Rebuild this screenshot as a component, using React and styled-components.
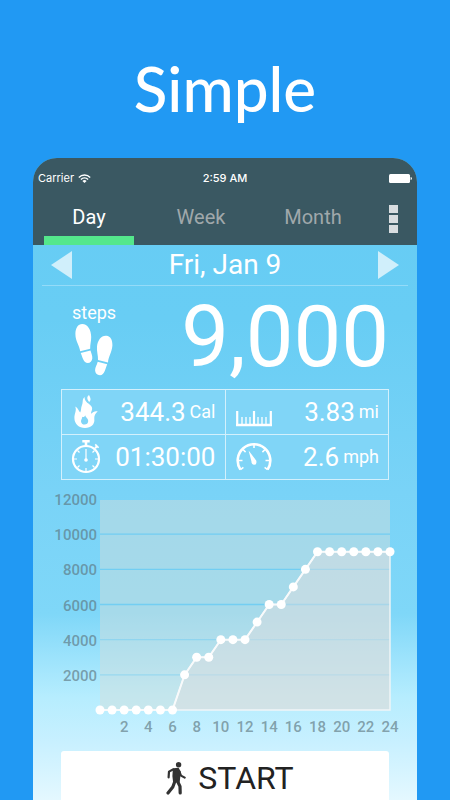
import React from 'react';
import styled, { createGlobalStyle } from 'styled-components';

const GlobalStyle = createGlobalStyle`
  * {
    box-sizing: border-box;
  }

  body {
    margin: 0;
    background-color: #2199f3;
    font-family: Roboto, 'Liberation Sans', sans-serif;
  }
`;

const Page = styled.main`
  height: 100vh;
  display: flex;
  flex-direction: column;
  overflow: hidden;
  background-color: #2199f3;
  color: #fff;
`;

const Title = styled.h1`
  margin: 0;
  padding: 48px 0 30px;
  font-family: Lato, sans-serif;
  font-size: 62px;
  font-weight: 500;
  line-height: 80px;
  text-align: center;
`;

const Phone = styled.section`
  flex: 1;
  min-height: 0;
  margin: 0 33px;
  display: flex;
  flex-direction: column;
  overflow: hidden;
  border-radius: 24px 24px 0 0;
  background: linear-gradient(
    #66ccf4 0%,
    #68cdf4 25%,
    #79d3f7 52%,
    #7fd7f8 71%,
    #9de3fc 78%,
    #b6edfe 84%,
    #c8f0ff 91%,
    #e4f8ff 100%
  );
`;

const Header = styled.header`
  flex: none;
  background-color: #3a5862;
`;

const StatusBar = styled.div`
  display: grid;
  grid-template-columns: 1fr auto 1fr;
  align-items: center;
  height: 40px;
  padding: 0 5px;
  font-family: Inter, sans-serif;
  font-size: 11px;
`;

const Carrier = styled.span`
  display: flex;
  align-items: center;
  gap: 4px;
`;

const Time = styled.span`
  font-weight: 500;
`;

const BatteryIcon = styled.svg`
  justify-self: end;
`;

const Nav = styled.nav`
  display: flex;
  gap: 22px;
  height: 47px;
  padding: 0 11px;
`;

const Tab = styled.button`
  flex: 1;
  padding: 0;
  border: 0;
  border-bottom: 9px solid ${({ $active }) => ($active ? '#54e78c' : 'transparent')};
  background: none;
  color: ${({ $active }) => ($active ? '#fff' : '#a0a8ab')};
  font-family: inherit;
  font-size: 20px;
  line-height: 38px;
  cursor: pointer;
`;

const MenuButton = styled.button`
  display: flex;
  flex-direction: column;
  align-items: center;
  gap: 2px;
  width: 26px;
  padding: 7px 0;
  border: 0;
  background: none;
  cursor: pointer;
`;

const MenuDot = styled.span`
  width: 9px;
  height: 8px;
  background-color: #d8dde0;
`;

const DateBar = styled.div`
  flex: none;
  display: flex;
  align-items: center;
  justify-content: space-between;
  height: 41px;
  margin: 0 9px;
  padding: 0 9px;
  border-bottom: 1px solid #94dbf8;
`;

const ArrowButton = styled.button`
  display: flex;
  padding: 0;
  border: 0;
  background: none;
  color: #d0effb;
  cursor: pointer;
`;

const DateText = styled.h2`
  margin: 0;
  font-size: 28px;
  font-weight: 400;
  line-height: 40px;
`;

const Summary = styled.div`
  flex: none;
  display: flex;
  align-items: flex-start;
  justify-content: space-between;
  height: 103px;
  padding: 0 28px 0 39px;
`;

const Steps = styled.div`
  display: flex;
  flex-direction: column;
  align-items: center;
  padding-top: 16px;
  font-size: 18px;
  line-height: 22px;
`;

const StepCount = styled.div`
  font-size: 85px;
  line-height: 102px;
`;

const Stats = styled.div`
  flex: none;
  display: grid;
  grid-template-columns: 1fr 1fr;
  gap: 1px;
  margin: 0 28px;
  border: 1px solid #d3f0fc;
  background-color: #d3f0fc;
`;

const Stat = styled.div`
  display: flex;
  align-items: center;
  justify-content: space-between;
  height: 44px;
  padding: 0 9px;
  background-color: #80d5f7;
`;

const Value = styled.span`
  display: flex;
  align-items: center;
  gap: 4px;
  font-size: 26px;
  line-height: 40px;
`;

const Unit = styled.span`
  font-size: 18px;
`;

const Chart = styled.svg`
  flex: none;
  display: block;
  width: 100%;
  height: auto;
  margin: 9px 0 12px;
`;

const AxisLabel = styled.text`
  fill: #5c747c;
  fill-opacity: 0.65;
  font-size: 15px;
  font-weight: 500;
`;

const StartButton = styled.button`
  flex: none;
  display: flex;
  align-items: center;
  justify-content: center;
  gap: 12px;
  height: 56px;
  margin: 0 28px;
  padding: 0 0 2px 10px;
  border: 0;
  border-radius: 3px;
  background-color: #fff;
  color: #222;
  font-family: inherit;
  font-size: 32px;
  cursor: pointer;
`;

const WifiIcon = () => (
  <svg width="13" height="9" viewBox="0 0 13 9" fill="none" stroke="#fff" strokeWidth="1.4" aria-hidden="true">
    <path d="M0.8 3.4C4 0.2 9 0.2 12.2 3.4" />
    <path d="M2.9 5.4C4.9 3.5 8.1 3.5 10.1 5.4" />
    <path d="M4.4 6.9C5.6 5.8 7.4 5.8 8.6 6.9L6.5 9Z" fill="#fff" stroke="none" />
  </svg>
);

const FootprintsIcon = () => (
  <svg width="38" height="52" viewBox="0 0 38 52" fill="#fff" aria-hidden="true">
    <path d="M7.2 0C12.8 0 16.2 6 16.2 13C16.2 17.5 15 20.5 15.2 24.8L5.2 27.2C4.6 21.5 0.4 17.5 0.4 10C0.4 4 3 0 7.2 0Z" />
    <path d="M5.7 28.9L15.5 26.6C16 29 17.6 31.5 17.3 34.5C17 37.2 15.2 39 12.8 39C8.5 39 7.5 33 5.7 28.9Z" />
    <path d="M31.5 11.8C35.5 12.2 37.6 16 37.4 21.5C37 28 33.4 32.5 33 38.5L23 35.9C23.3 31.5 21.5 27.5 22 22.5C22.6 16 26.5 11.2 31.5 11.8Z" />
    <path d="M22.7 37.7L32.2 40.2C30.3 44.5 29.8 51 25 51.2C22 51.2 20.1 49 20.1 46C20.1 43 22 40.7 22.7 37.7Z" />
  </svg>
);

const FlameIcon = () => (
  <svg width="30" height="34" viewBox="-3 0 30 34" fill="#fff" aria-hidden="true">
    <path
      fillRule="evenodd"
      d="M10.6 2C7.8 4.3 9.4 7 8 10C6.6 13 7.6 15.4 6.2 17.4C4.6 16.5 4.6 13.4 1.2 11.6C3 15.6 0.4 18.2 0.4 23C0.4 29 5 33 11 33C17 33 21 29.2 20.3 24C20 21 21.3 18.4 23.7 16.6C21 15.8 19.2 17 17.2 18.8C16.6 16.3 19.3 14.5 17.5 11.4C15.8 8.6 10.2 7.4 10.6 2ZM11.3 20.2C11.5 22.4 14.2 23.2 14.2 26C14.2 28.4 12.6 29.6 10.6 29.6C8.6 29.6 7 28.2 7 26.2C7 24.4 8.4 23.4 8.2 21.8C9.6 22.4 10.8 21.8 11.3 20.2Z"
    />
    <path d="M15 0C12.4 2 13 4.4 15.2 7C17.2 5 16.8 3.4 15 0Z" />
  </svg>
);

const StopwatchIcon = () => (
  <svg width="30" height="34" viewBox="-1 0 30 34" fill="none" stroke="#fff" aria-hidden="true">
    <circle cx="14" cy="19" r="13" strokeWidth="2.2" />
    <path d="M10.3 1.2H17.7M14 1V6" strokeWidth="2.6" />
    <path d="M23 8.2L25 6.2" strokeWidth="2" />
    <path d="M23.2 4.4L26.6 7.8" strokeWidth="1.6" />
    <path d="M14 9V19" strokeWidth="1.2" />
    <circle cx="14" cy="20" r="1.8" fill="#fff" stroke="none" />
    <path d="M2 19H5M23 19H26M14 28V31M5.5 10.5L7.5 12.5M22.5 10.5L20.5 12.5M5.5 27.5L7.5 25.5M22.5 27.5L20.5 25.5" strokeWidth="1.2" />
  </svg>
);

const RulerIcon = () => (
  <svg width="40" height="34" viewBox="-1 0 40 34" fill="none" stroke="#fff" aria-hidden="true">
    <path d="M1.2 16V30M18 16V30M34.8 16V30" strokeWidth="2.2" />
    <path d="M0 30H36" strokeWidth="2.4" />
    <path d="M6 22V29M10 22V29M14 22V29M22 22V29M26 22V29M30 22V29" strokeWidth="1.3" />
  </svg>
);

const GaugeIcon = () => (
  <svg width="40" height="34" viewBox="-1 -2 40 34" fill="none" stroke="#fff" aria-hidden="true">
    <path d="M4.4 27.6A16.3 16.3 0 1 1 31.6 27.6" strokeWidth="2.6" />
    <path d="M4.4 27.6L7.4 25.4M31.6 27.6L28.6 25.4M2 18.5H6.5M34 18.5H29.5M18 2.5V6M7 7.5L9.6 10.1M29 7.5L26.4 10.1" strokeWidth="1.6" />
    <path d="M12.6 8.6L20.2 18.6C21 21.3 19.8 22.8 18.2 22.8C16.4 22.8 15.4 21.2 15.4 19.2Z" fill="#fff" stroke="none" />
  </svg>
);

const WalkerIcon = () => (
  <svg width="20" height="33" viewBox="0 0 20 33" fill="none" stroke="#333" strokeLinecap="round" strokeLinejoin="round" aria-hidden="true">
    <circle cx="12.6" cy="2.8" r="2.7" fill="#333" stroke="none" />
    <path d="M8 7.4L12 7L13.6 10L12.6 19L8.2 19.4L7.6 14Z" fill="#333" strokeWidth="2.4" />
    <path d="M7.4 7.3L3 9.6L2.6 15.4" strokeWidth="2.2" />
    <path d="M13.4 9.6L15 13.6L18.7 15.6" strokeWidth="2.2" />
    <path d="M9 19L6.8 25L2 31" strokeWidth="3.2" />
    <path d="M11.4 19L14 24.4L14.2 31" strokeWidth="3.2" />
  </svg>
);

const stepsByHour = [
  0, 0, 0, 0, 0, 0, 0, 2000, 3000, 3000, 4000, 4000, 4000, 5000, 6000, 6000, 7000, 8000,
  9000, 9000, 9000, 9000, 9000, 9000, 9000,
];

const hourTicks = [2, 4, 6, 8, 10, 12, 14, 16, 18, 20, 22, 24];
const stepTicks = [2000, 4000, 6000, 8000, 10000, 12000];

const toX = (hour) => 67 + (hour * 290) / 24;
const toY = (steps) => 221 - (steps * 211) / 12000;

const StepsChart = () => {
  const points = stepsByHour.map((steps, hour) => `${toX(hour)},${toY(steps)}`).join(' ');

  return (
    <Chart viewBox="0 0 384 250" role="img" aria-label="Steps by hour">
      <rect x="67" y="11" width="290" height="210" fill="#d6dedb" fillOpacity="0.46" />
      {stepTicks.map((tick) => (
        <g key={tick}>
          {tick < 12000 && (
            <line x1="67" x2="357" y1={toY(tick)} y2={toY(tick)} stroke="#62c9f4" strokeWidth="1.4" strokeOpacity={tick > 4000 ? 0.75 : 0.4} />
          )}
          <AxisLabel x="64" y={toY(tick) + 6} textAnchor="end">
            {tick}
          </AxisLabel>
        </g>
      ))}
      <polygon
        points={`67,221 ${points} 357,221`}
        fill="#dbdde0"
        fillOpacity="0.5"
        stroke="#f1f5f7"
        strokeWidth="1.4"
      />
      <polyline points={points} fill="none" stroke="#f8fafb" strokeWidth="2" />
      {stepsByHour.map((steps, hour) => (
        <circle key={hour} cx={toX(hour)} cy={toY(steps)} r="4.5" fill="#fff" />
      ))}
      {hourTicks.map((hour) => (
        <AxisLabel key={hour} x={toX(hour)} y="243" textAnchor="middle">
          {hour}
        </AxisLabel>
      ))}
    </Chart>
  );
};

const App = () => {
  const [tab, setTab] = React.useState('Day');

  return (
    <>
      <GlobalStyle />
      <Page>
        <Title>Simple</Title>
        <Phone>
          <Header>
            <StatusBar>
              <Carrier>
                Carrier
                <WifiIcon />
              </Carrier>
              <Time>2:59 AM</Time>
              <BatteryIcon width="23" height="9" viewBox="0 0 23 9" fill="#fff" aria-hidden="true">
                <rect width="21" height="9" rx="1.5" />
                <path d="M21.6 3C23.4 3.4 23.4 5.6 21.6 6Z" />
              </BatteryIcon>
            </StatusBar>
            <Nav>
              {['Day', 'Week', 'Month'].map((name) => (
                <Tab key={name} $active={name === tab} onClick={() => setTab(name)}>
                  {name}
                </Tab>
              ))}
              <MenuButton aria-label="Menu">
                <MenuDot />
                <MenuDot />
                <MenuDot />
              </MenuButton>
            </Nav>
          </Header>

          <DateBar>
            <ArrowButton aria-label="Previous day">
              <svg width="21" height="28" viewBox="0 0 21 28" fill="currentColor">
                <path d="M21 0V28L0 14Z" />
              </svg>
            </ArrowButton>
            <DateText>Fri, Jan 9</DateText>
            <ArrowButton aria-label="Next day">
              <svg width="21" height="28" viewBox="0 0 21 28" fill="currentColor">
                <path d="M0 0V28L21 14Z" />
              </svg>
            </ArrowButton>
          </DateBar>

          <Summary>
            <Steps>
              steps
              <FootprintsIcon />
            </Steps>
            <StepCount>9,000</StepCount>
          </Summary>

          <Stats>
            <Stat>
              <FlameIcon />
              <Value>
                344.3<Unit>Cal</Unit>
              </Value>
            </Stat>
            <Stat>
              <RulerIcon />
              <Value>
                3.83<Unit>mi</Unit>
              </Value>
            </Stat>
            <Stat>
              <StopwatchIcon />
              <Value>01:30:00</Value>
            </Stat>
            <Stat>
              <GaugeIcon />
              <Value>
                2.6<Unit>mph</Unit>
              </Value>
            </Stat>
          </Stats>

          <StepsChart />

          <StartButton>
            <WalkerIcon />
            START
          </StartButton>
        </Phone>
      </Page>
    </>
  );
};

export default App;
